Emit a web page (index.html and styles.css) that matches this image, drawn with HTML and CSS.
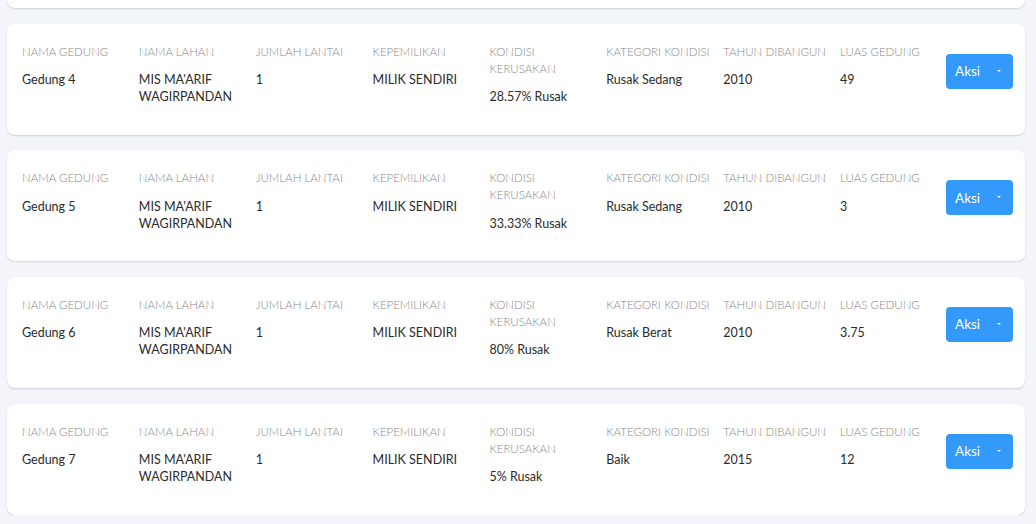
FILE: index.html
```html
<!DOCTYPE html>
<html lang="id">
<head>
<meta charset="utf-8">
<title>Data Gedung</title>
<link rel="stylesheet" href="styles.css">
</head>
<body>
<div class="list">
  <div class="card card-stub"></div>

  <div class="card">
    <div class="fields">
      <div class="field"><div class="label">NAMA GEDUNG</div><div class="value">Gedung 4</div></div>
      <div class="field"><div class="label">NAMA LAHAN</div><div class="value">MIS MA'ARIF WAGIRPANDAN</div></div>
      <div class="field"><div class="label">JUMLAH LANTAI</div><div class="value">1</div></div>
      <div class="field"><div class="label">KEPEMILIKAN</div><div class="value">MILIK SENDIRI</div></div>
      <div class="field"><div class="label">KONDISI KERUSAKAN</div><div class="value">28.57% Rusak</div></div>
      <div class="field"><div class="label">KATEGORI KONDISI</div><div class="value">Rusak Sedang</div></div>
      <div class="field"><div class="label">TAHUN DIBANGUN</div><div class="value">2010</div></div>
      <div class="field"><div class="label">LUAS GEDUNG</div><div class="value">49</div></div>
    </div>
    <button class="btn-aksi">Aksi <span class="caret"></span></button>
  </div>

  <div class="card">
    <div class="fields">
      <div class="field"><div class="label">NAMA GEDUNG</div><div class="value">Gedung 5</div></div>
      <div class="field"><div class="label">NAMA LAHAN</div><div class="value">MIS MA'ARIF WAGIRPANDAN</div></div>
      <div class="field"><div class="label">JUMLAH LANTAI</div><div class="value">1</div></div>
      <div class="field"><div class="label">KEPEMILIKAN</div><div class="value">MILIK SENDIRI</div></div>
      <div class="field"><div class="label">KONDISI KERUSAKAN</div><div class="value">33.33% Rusak</div></div>
      <div class="field"><div class="label">KATEGORI KONDISI</div><div class="value">Rusak Sedang</div></div>
      <div class="field"><div class="label">TAHUN DIBANGUN</div><div class="value">2010</div></div>
      <div class="field"><div class="label">LUAS GEDUNG</div><div class="value">3</div></div>
    </div>
    <button class="btn-aksi">Aksi <span class="caret"></span></button>
  </div>

  <div class="card">
    <div class="fields">
      <div class="field"><div class="label">NAMA GEDUNG</div><div class="value">Gedung 6</div></div>
      <div class="field"><div class="label">NAMA LAHAN</div><div class="value">MIS MA'ARIF WAGIRPANDAN</div></div>
      <div class="field"><div class="label">JUMLAH LANTAI</div><div class="value">1</div></div>
      <div class="field"><div class="label">KEPEMILIKAN</div><div class="value">MILIK SENDIRI</div></div>
      <div class="field"><div class="label">KONDISI KERUSAKAN</div><div class="value">80% Rusak</div></div>
      <div class="field"><div class="label">KATEGORI KONDISI</div><div class="value">Rusak Berat</div></div>
      <div class="field"><div class="label">TAHUN DIBANGUN</div><div class="value">2010</div></div>
      <div class="field"><div class="label">LUAS GEDUNG</div><div class="value">3.75</div></div>
    </div>
    <button class="btn-aksi">Aksi <span class="caret"></span></button>
  </div>

  <div class="card">
    <div class="fields">
      <div class="field"><div class="label">NAMA GEDUNG</div><div class="value">Gedung 7</div></div>
      <div class="field"><div class="label">NAMA LAHAN</div><div class="value">MIS MA'ARIF WAGIRPANDAN</div></div>
      <div class="field"><div class="label">JUMLAH LANTAI</div><div class="value">1</div></div>
      <div class="field"><div class="label">KEPEMILIKAN</div><div class="value">MILIK SENDIRI</div></div>
      <div class="field"><div class="label">KONDISI KERUSAKAN</div><div class="value">5% Rusak</div></div>
      <div class="field"><div class="label">KATEGORI KONDISI</div><div class="value">Baik</div></div>
      <div class="field"><div class="label">TAHUN DIBANGUN</div><div class="value">2015</div></div>
      <div class="field"><div class="label">LUAS GEDUNG</div><div class="value">12</div></div>
    </div>
    <button class="btn-aksi">Aksi <span class="caret"></span></button>
  </div>
</div>
</body>
</html>
```
FILE: styles.css
```css
html, body {
  margin: 0;
  padding: 0;
  background: #f4f5fa;
  overflow: hidden;
}

body {
  font-family: "Lato", "Open Sans", sans-serif;
  color: #333;
}

.list {
  display: flex;
  flex-direction: column;
  gap: 15.67px;
  margin: -103px 11px 0 7px;
}

.card {
  background: #fff;
  border-radius: 8px;
  box-shadow: 0 1px 2px rgba(0, 0, 0, 0.14), 0 0 1px rgba(0, 0, 0, 0.05);
  height: 111px;
  box-sizing: border-box;
  padding: 19px 12px 0 15px;
  display: flex;
  align-items: flex-start;
}

.fields {
  display: grid;
  grid-template-columns: repeat(7, 116.86px) 106px;
}

.field {
  padding-right: 8px;
}

.label {
  font-size: 11.5px;
  line-height: 17px;
  font-weight: 300;
  color: #888;
  margin-bottom: 11.5px;
}

.value {
  font-size: 12.5px;
  line-height: 17px;
  color: #2b2b2b;
}

.btn-aksi {
  margin-top: 11px;
  width: 67px;
  height: 35px;
  border: none;
  border-radius: 4px;
  background: #3399fb;
  color: #fff;
  font-family: inherit;
  font-size: 13.5px;
  padding: 0 0 0 9px;
  display: flex;
  align-items: center;
  justify-content: space-between;
}

.caret {
  width: 0;
  height: 0;
  border-left: 2px solid transparent;
  border-right: 2px solid transparent;
  border-top: 2px solid #fff;
  margin-right: 12px;
  margin-top: -1px;
}
```
